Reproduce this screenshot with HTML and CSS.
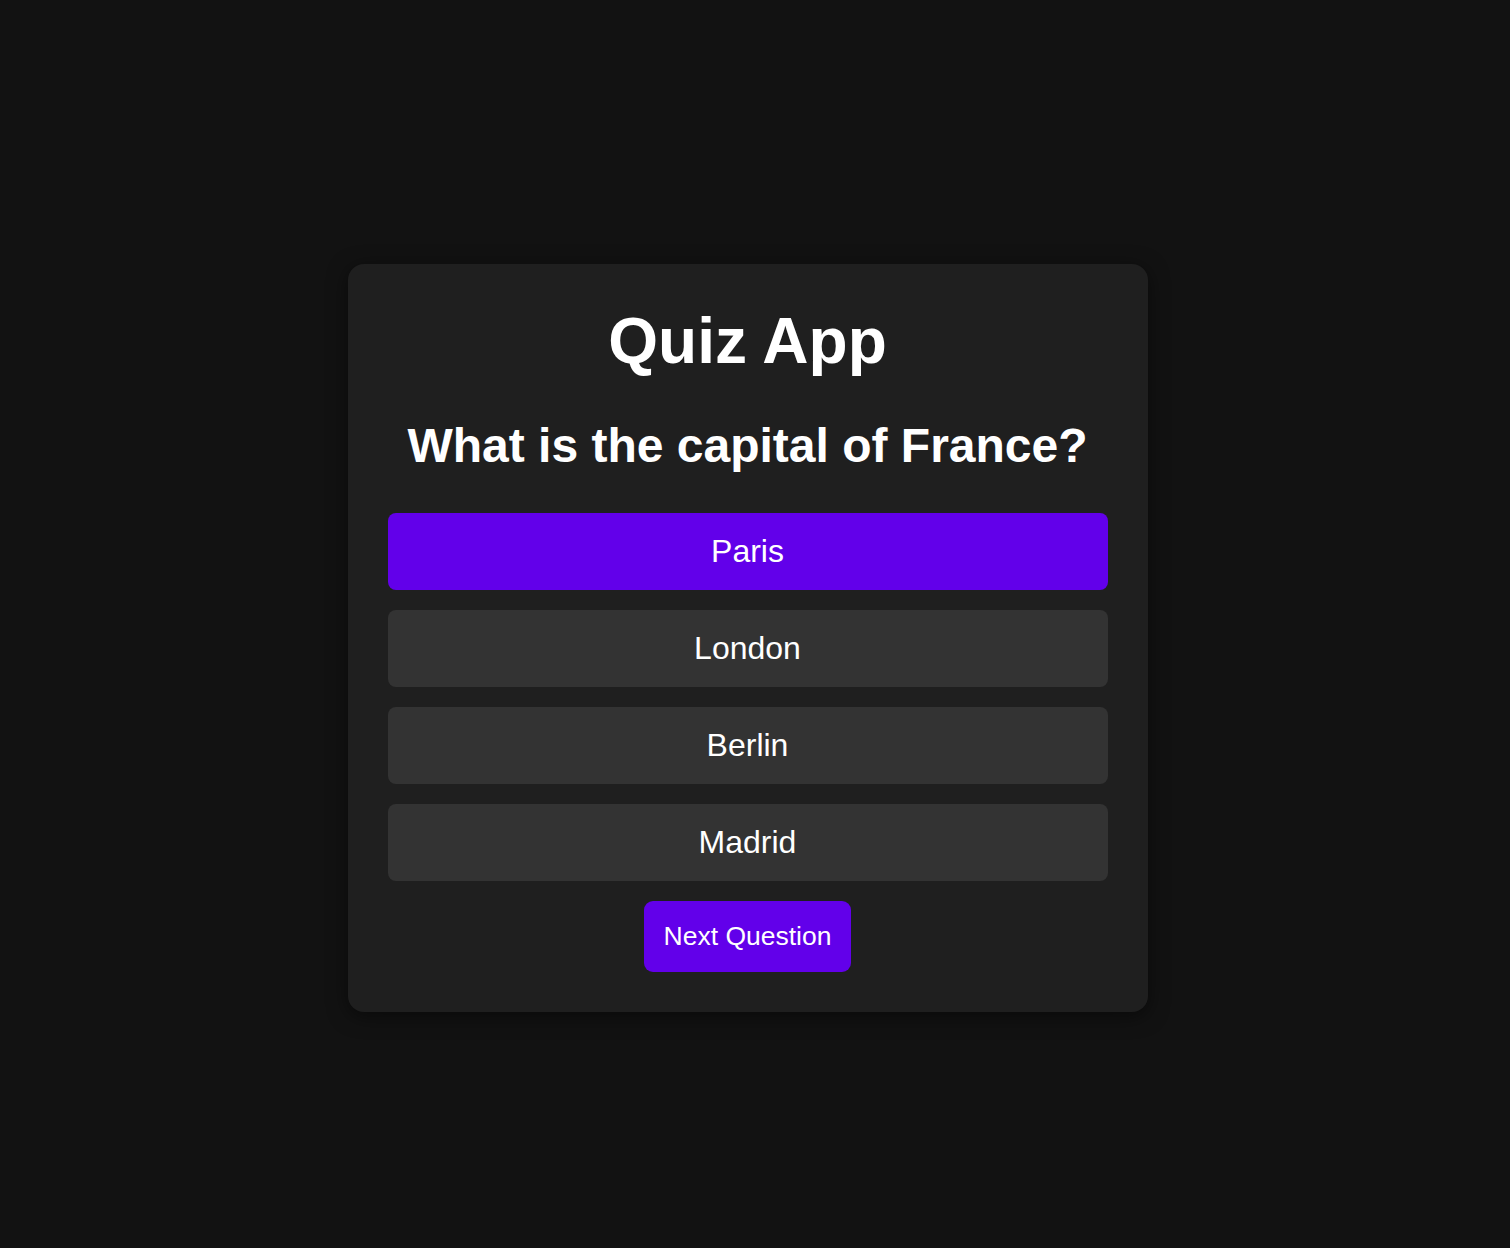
FILE: index.html
```html
<!DOCTYPE html>
<html lang="en">
<head>
<meta charset="UTF-8">
<title>Quiz App</title>
<link rel="stylesheet" href="styles.css">
</head>
<body>
  <main class="quiz-card">
    <h1 class="quiz-title">Quiz App</h1>
    <h2 class="quiz-question">What is the capital of France?</h2>
    <div class="options">
      <button class="option option-selected">Paris</button>
      <button class="option">London</button>
      <button class="option">Berlin</button>
      <button class="option">Madrid</button>
    </div>
    <button class="next-btn">Next Question</button>
  </main>
</body>
</html>
```

FILE: styles.css
```css
* {
  box-sizing: border-box;
}

html, body {
  margin: 0;
}

body {
  min-height: 100vh;
  padding: 28px 15px 0 0;
  background: #121212;
  color: #ffffff;
  font-family: "Liberation Sans", Arial, sans-serif;
  display: flex;
  align-items: center;
  justify-content: center;
}

.quiz-card {
  width: 800px;
  padding: 40px;
  background: #1f1f1f;
  border-radius: 16px;
  box-shadow: 0 4px 20px rgba(0, 0, 0, 0.5);
  display: flex;
  flex-direction: column;
  align-items: center;
}

.quiz-title {
  margin: 0 0 40px;
  font-size: 64px;
  font-weight: 700;
  text-align: center;
}

.quiz-question {
  margin: 0 0 40px;
  font-size: 48px;
  font-weight: 700;
  text-align: center;
}

.options {
  width: 100%;
  display: flex;
  flex-direction: column;
  gap: 20px;
}

.option {
  width: 100%;
  padding: 20px;
  border: none;
  border-radius: 8px;
  background: #333333;
  color: #ffffff;
  font-family: inherit;
  font-size: 32px;
  line-height: 37px;
  text-align: center;
  cursor: pointer;
}

.option-selected {
  background: #6200ea;
}

.next-btn {
  margin-top: 20px;
  padding: 20px;
  border: none;
  border-radius: 9px;
  background: #6200ea;
  color: #ffffff;
  font-family: inherit;
  font-size: 26.5px;
  line-height: 31px;
  cursor: pointer;
}
```
